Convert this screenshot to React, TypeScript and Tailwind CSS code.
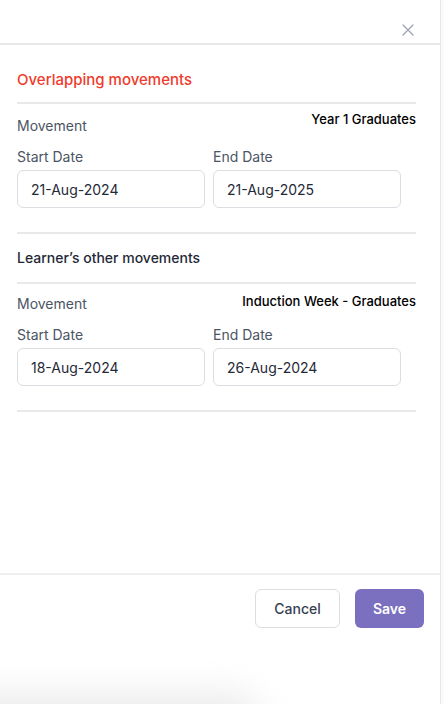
import { X } from 'lucide-react'

type Movement = {
  name: string
  start: string
  end: string
}

const overlapping: Movement = { name: 'Year 1 Graduates', start: '21-Aug-2024', end: '21-Aug-2025' }
const others: Movement[] = [{ name: 'Induction Week - Graduates', start: '18-Aug-2024', end: '26-Aug-2024' }]

function DateField({ label, value }: { label: string; value: string }) {
  return (
    <div className="flex flex-col">
      <span className="text-[14px] leading-[20px] text-[#4b5563]">{label}</span>
      <div className="mt-[3px] w-[188px] h-[38px] flex items-center px-[13px] border border-[#dcdde3] rounded-[6px] text-[14px] text-[#1f2937]">
        {value}
      </div>
    </div>
  )
}

function MovementBlock({ movement, compact = false }: { movement: Movement; compact?: boolean }) {
  return (
    <div className={`pb-[24px] border-b-2 border-[#e8e8ea] ${compact ? 'pt-[8px]' : 'pt-[6px]'}`}>
      <div className="flex justify-between items-start">
        <span className={`text-[14px] leading-[20px] text-[#4b5563] ${compact ? 'mt-[2px]' : 'mt-[6px]'}`}>Movement</span>
        <span className="text-[13px] leading-[18px] font-medium text-black">{movement.name}</span>
      </div>
      <div className="grid grid-cols-[196px_196px] mt-[11px]">
        <DateField label="Start Date" value={movement.start} />
        <DateField label="End Date" value={movement.end} />
      </div>
    </div>
  )
}

export default function App() {
  return (
    <div
      className="relative w-[444px] h-[704px] bg-white flex overflow-hidden"
      style={{ fontFamily: 'Inter, "Noto Sans", sans-serif' }}
    >
      <div className="w-[440px] h-full flex flex-col">
        {/* Header */}
        <div className="h-[45px] border-b-2 border-[#e8e8ea] flex items-end justify-end pr-[22px] pb-[3px] shrink-0">
          <X size={20} strokeWidth={1.5} className="text-[#9ca3af]" />
        </div>

        {/* Body */}
        <div className="flex-1 px-[17px] pr-[24px]">
          <div className="pt-[24px] pb-[11px] border-b-2 border-[#e8e8ea]">
            <h2 className="text-[15px] leading-[22px] font-medium text-[#ef3b2d]">Overlapping movements</h2>
          </div>
          <MovementBlock movement={overlapping} />

          <div className="pt-[14px] pb-[14px] border-b-2 border-[#e8e8ea]">
            <h3 className="text-[14px] leading-[20px] font-medium text-[#1f2937]">Learner’s other movements</h3>
          </div>
          {others.map((m) => (
            <MovementBlock key={m.name} movement={m} compact />
          ))}
        </div>

        {/* Footer */}
        <div className="h-[131px] border-t-2 border-[#efeff1] shrink-0 flex justify-end items-start gap-[15px] pt-[14px] pr-[16px]">
          <button className="w-[85px] h-[39px] rounded-[6px] border border-[#dcdde3] bg-white text-[14px] font-medium text-[#374151]">
            Cancel
          </button>
          <button className="w-[69px] h-[39px] rounded-[6px] bg-[#7b6fc0] text-[14px] font-semibold text-white">
            Save
          </button>
        </div>
      </div>

      {/* scrollbar track */}
      <div className="w-[4px] h-full border-l border-[#e5e7eb] bg-[#fafafa]" />

      {/* soft shadow at bottom left */}
      <div className="absolute left-[-80px] bottom-[-40px] w-[340px] h-[50px] rounded-full bg-[#e5e5e5] blur-[18px] opacity-80 pointer-events-none" />
    </div>
  )
}
